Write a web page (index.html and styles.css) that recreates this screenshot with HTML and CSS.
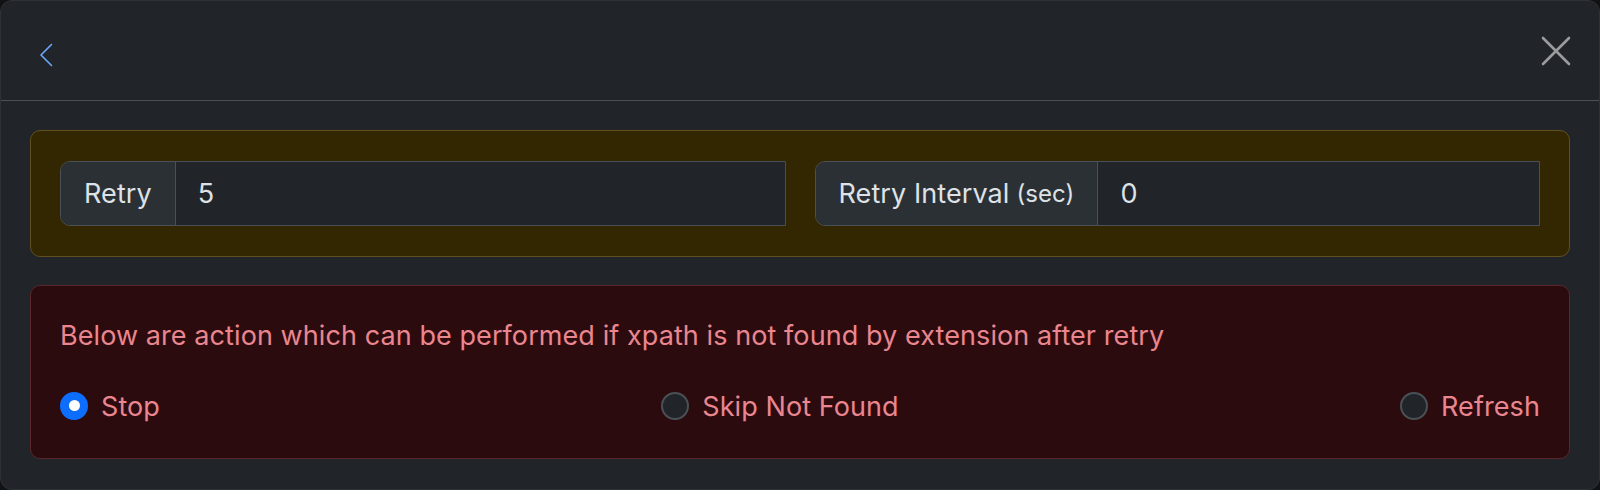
FILE: index.html
```html
<!DOCTYPE html>
<html lang="en">
<head>
<meta charset="utf-8">
<title>Retry settings</title>
<link rel="stylesheet" href="styles.css">
</head>
<body>
<div class="modal">
  <div class="modal-header">
    <button class="btn-back" aria-label="Back">
      <svg width="14" height="24" viewBox="0 0 14 24"><path d="M12.5 1.5 L2 12 L12.5 22.5" fill="none" stroke="#6ea8fe" stroke-width="1.6" stroke-linecap="round" stroke-linejoin="round"/></svg>
    </button>
    <button class="btn-close" aria-label="Close">
      <svg width="30" height="30" viewBox="0 0 30 30"><path d="M2 2 L28 28 M28 2 L2 28" fill="none" stroke="#9a9c9e" stroke-width="2.6" stroke-linecap="round"/></svg>
    </button>
  </div>
  <div class="modal-body">
    <div class="alert alert-warning">
      <div class="row">
        <div class="input-group">
          <span class="input-label">Retry</span>
          <span class="input-value">5</span>
        </div>
        <div class="input-group">
          <span class="input-label">Retry Interval <small>(sec)</small></span>
          <span class="input-value">0</span>
        </div>
      </div>
    </div>
    <div class="alert alert-danger">
      <p class="alert-text">Below are action which can be performed if xpath is not found by extension after retry</p>
      <div class="radio-row">
        <label class="radio"><span class="radio-input checked"></span>Stop</label>
        <label class="radio"><span class="radio-input"></span>Skip Not Found</label>
        <label class="radio"><span class="radio-input"></span>Refresh</label>
      </div>
    </div>
  </div>
</div>
</body>
</html>
```

FILE: styles.css
```css
* { box-sizing: border-box; }
html, body {
  margin: 0;
  padding: 0;
  background: #111213;
}
body {
  width: 1600px;
  height: 490px;
  overflow: hidden;
  font-family: Inter, "Noto Sans", sans-serif;
  font-size: 27px;
  letter-spacing: 0.08px;
  line-height: 39px;
  color: #dee2e6;
}
.modal {
  width: 1600px;
  height: 490px;
  background: #212529;
  border: 1px solid #2e3236;
  border-radius: 12px;
  overflow: hidden;
}
.modal-header {
  height: 100px;
  border-bottom: 1px solid #495057;
  display: flex;
  align-items: center;
  justify-content: space-between;
  padding: 0 28px 0 38px;
}
.btn-back, .btn-close {
  background: none;
  border: 0;
  padding: 0;
  display: flex;
}
.btn-back { margin-top: 8px; }
.btn-close { margin-top: 1px; }
.modal-body {
  padding: 29px 29px;
}
.alert {
  border: 1px solid;
  border-radius: 10px;
}
.alert-warning {
  background: #332701;
  border-color: #60501f;
  padding: 30px 29px;
}
.row {
  display: grid;
  grid-template-columns: 1fr 1fr;
  column-gap: 29px;
}
.input-group {
  display: flex;
  height: 65px;
  border: 1px solid #495057;
  border-radius: 10px 0 0 10px;
  overflow: hidden;
}
.input-label {
  display: flex;
  align-items: center;
  background: #2b3035;
  border-right: 1px solid #495057;
  padding: 0 23px;
  color: #dee2e6;
  white-space: nowrap;
}
.input-label small {
  font-size: 24px;
  margin-left: 7px;
}
.input-value {
  display: flex;
  align-items: center;
  flex: 1;
  background: #212529;
  padding: 0 22px;
  color: #dee2e6;
}
.alert-danger {
  margin-top: 28px;
  background: #2c0b0e;
  border-color: #58272b;
  padding: 30px 29px 32px;
  color: #ea868f;
}
.alert-text {
  margin: 0 0 32px;
}
.radio-row {
  display: flex;
  justify-content: space-between;
}
.radio {
  display: flex;
  align-items: center;
  gap: 13px;
}
.radio-input {
  width: 28px;
  height: 28px;
  border-radius: 50%;
  border: 2px solid #4a5156;
  background: #212529;
  display: inline-block;
  position: relative;
  margin-top: -2px;
}
.radio-input.checked {
  background: #0d6efd;
  border-color: #0d6efd;
}
.radio-input.checked::after {
  content: "";
  position: absolute;
  left: 50%;
  top: 50%;
  width: 11px;
  height: 11px;
  margin: -5.5px 0 0 -5.5px;
  border-radius: 50%;
  background: #fff;
}
```
